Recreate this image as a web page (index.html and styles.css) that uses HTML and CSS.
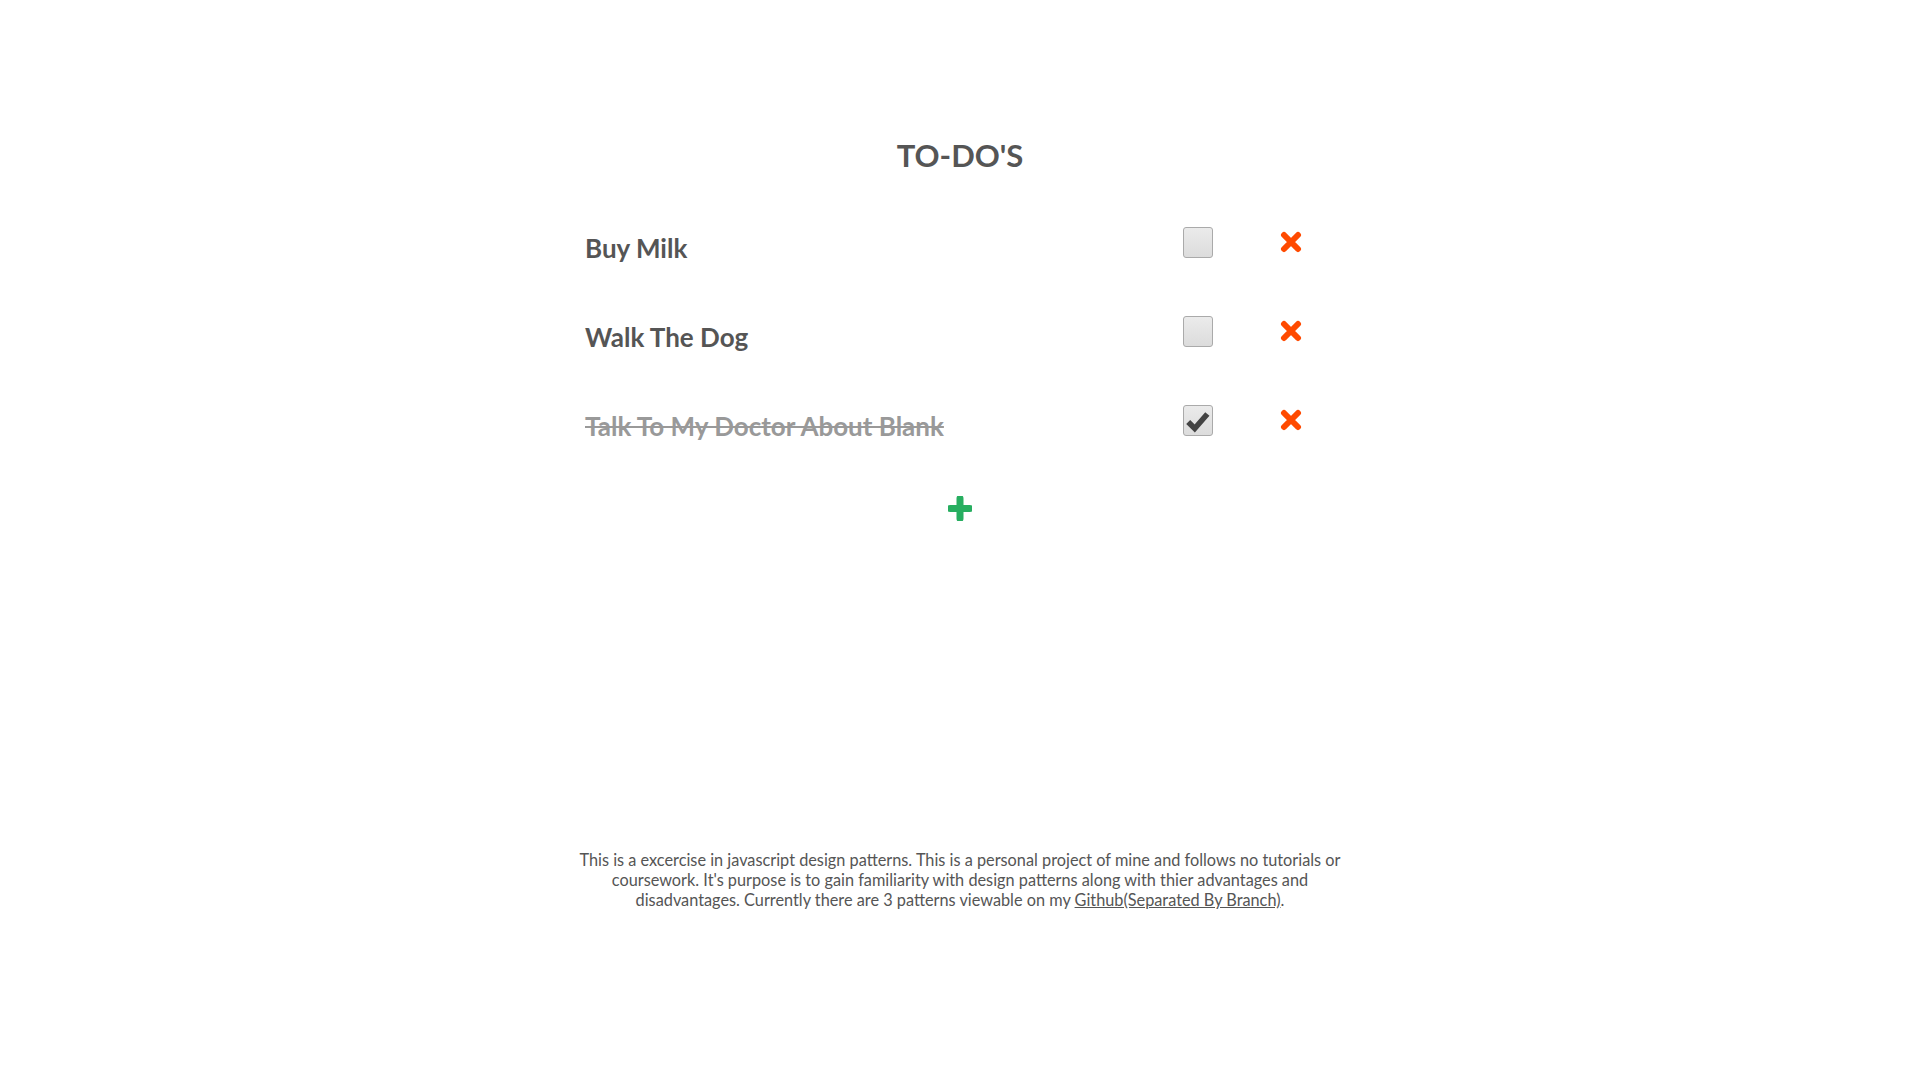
FILE: index.html
```html
<!DOCTYPE html>
<html lang="en">
<head>
<meta charset="utf-8">
<title>To-Do's</title>
<link rel="stylesheet" href="styles.css">
</head>
<body>
<main class="app">
  <h1 class="title">TO-DO'S</h1>
  <ul class="list">
    <li class="item">
      <span class="name">Buy Milk</span>
      <span class="check"></span>
      <span class="remove"><svg viewBox="0 0 22 22" width="22" height="22"><path d="M4 4 L18 18 M18 4 L4 18"/></svg></span>
    </li>
    <li class="item">
      <span class="name">Walk The Dog</span>
      <span class="check"></span>
      <span class="remove"><svg viewBox="0 0 22 22" width="22" height="22"><path d="M4 4 L18 18 M18 4 L4 18"/></svg></span>
    </li>
    <li class="item done">
      <span class="name">Talk To My Doctor About Blank</span>
      <span class="check checked"><svg viewBox="0 0 30 30" width="28" height="28"><path d="M4.5 16 L11.5 23 L25 7.5"/></svg></span>
      <span class="remove"><svg viewBox="0 0 22 22" width="22" height="22"><path d="M4 4 L18 18 M18 4 L4 18"/></svg></span>
    </li>
  </ul>
  <div class="add"><svg viewBox="0 0 24 25" width="24" height="25"><path d="M12 2.5 V22.5 M2 12.5 H22"/></svg></div>
  <p class="about">This is a excercise in javascript design patterns. This is a personal project of mine and follows no tutorials or coursework. It's purpose is to gain familiarity with design patterns along with thier advantages and disadvantages. Currently there are 3 patterns viewable on my <a href="#">Github(Separated By Branch)</a>.</p>
</main>
</body>
</html>
```
FILE: styles.css
```css
html, body {
  margin: 0;
  padding: 0;
  background: #fff;
}
body {
  font-family: Lato, "Open Sans", sans-serif;
  color: #555;
}
.app {
  display: flex;
  flex-direction: column;
  align-items: center;
  padding-top: 135px;
}
.title {
  margin: 0;
  font-size: 31px;
  line-height: 40px;
  font-weight: 700;
  color: #555;
}
.list {
  list-style: none;
  margin: 52px 0 0;
  padding: 0;
  width: 750px;
  display: flex;
  flex-direction: column;
  gap: 49px;
}
.item {
  display: flex;
  align-items: flex-start;
  height: 40px;
}
.name {
  flex: 1;
  font-size: 26px;
  line-height: 40px;
  font-weight: 700;
  color: #555;
  padding-top: 1px;
}
.done .name {
  color: #999;
  text-decoration: line-through;
}
.check {
  width: 28px;
  height: 29px;
  border: 1px solid #aaa;
  border-radius: 3px;
  background: linear-gradient(#ebebeb, #dcdcdc);
  display: flex;
  align-items: center;
  justify-content: center;
}
.check svg path {
  fill: none;
  stroke: #444;
  stroke-width: 6;
  stroke-linejoin: miter;
}
.remove {
  width: 30px;
  height: 30px;
  margin-left: 63px;
  margin-right: 29px;
  display: flex;
  align-items: center;
  justify-content: center;
}
.remove svg path {
  fill: none;
  stroke: #ff4a00;
  stroke-width: 6;
  stroke-linecap: round;
}
.add {
  margin-top: 51px;
  width: 24px;
  height: 25px;
}
.add svg {
  display: block;
}
.add svg path {
  fill: none;
  stroke: #27ae60;
  stroke-width: 7;
  stroke-linecap: round;
}
.about {
  margin: 329px 0 0;
  width: 800px;
  text-align: center;
  font-size: 16.3px;
  line-height: 20px;
  color: #555;
}
.about a {
  color: #555;
  text-decoration: underline;
}
```
